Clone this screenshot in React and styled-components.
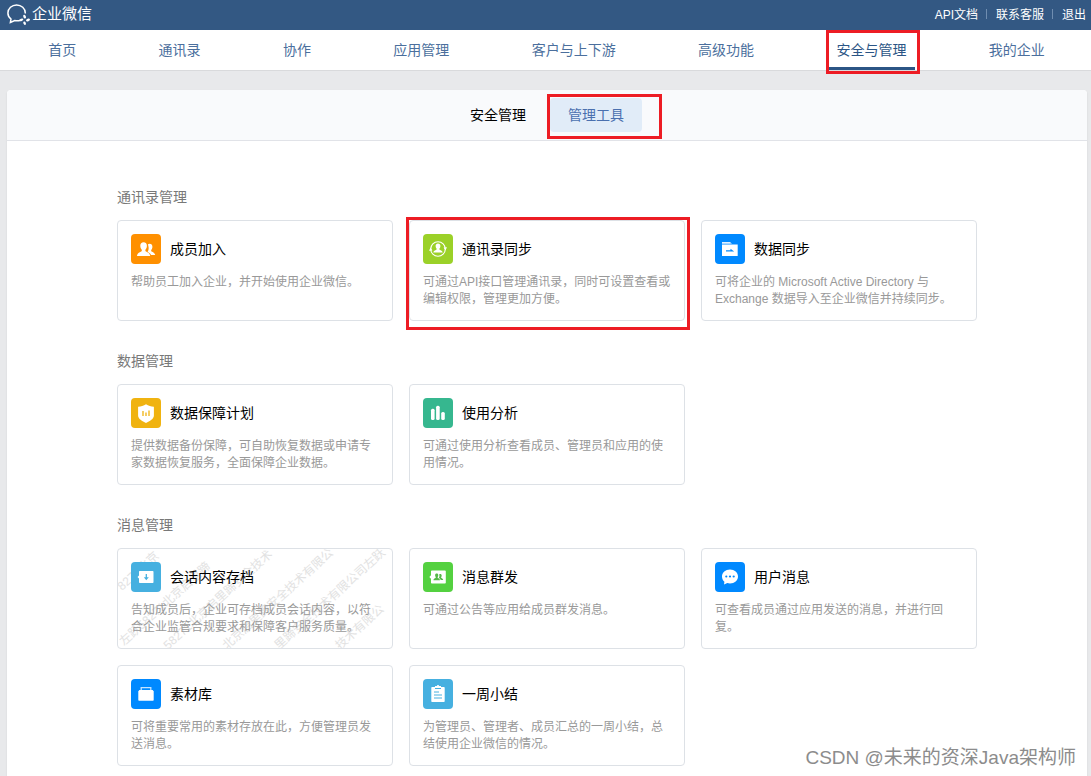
import React from 'react'
import styled, { createGlobalStyle, css } from 'styled-components'

const GlobalStyle = createGlobalStyle`
  * {
    box-sizing: border-box;
  }
  body {
    margin: 0;
    background-color: #e8e9eb;
    font-family: 'Liberation Sans', 'Noto Sans CJK SC', sans-serif;
    font-size: 14px;
    color: #000;
  }
  a {
    color: inherit;
    text-decoration: none;
  }
`

const mark = css`
  content: '';
  position: absolute;
  border: 3px solid #ed1c24;
  pointer-events: none;
  z-index: 1;
`
const Page = styled.div`
  position: relative;
  display: flex;
  flex-direction: column;
  min-height: 100vh;
`
const TopBar = styled.header`
  display: flex;
  align-items: flex-start;
  justify-content: space-between;
  height: 30px;
  padding: 0 5px 0 6px;
  background-color: #335883;
  color: #fff;
`
const Brand = styled.a`
  display: flex;
  align-items: center;
  gap: 2px;
  height: 27px;
  font-size: 15px;
  line-height: 20px;
`
const TopLinks = styled.div`
  display: flex;
  align-items: center;
  height: 27px;
  font-size: 12px;
`
const TopLink = styled.a`
  & + &::before {
    content: '';
    display: inline-block;
    width: 1px;
    height: 10px;
    margin: 0 9px 0 8px;
    background-color: #6f8db0;
  }
`
const Nav = styled.nav`
  display: flex;
  justify-content: space-around;
  height: 41px;
  padding: 0 5px 0 7px;
  background-color: #fff;
  border-bottom: 1px solid #d9dadc;
`
const NavLink = styled.a`
  position: relative;
  line-height: 40px;
  color: #4b6f9d;
  ${(props) =>
    props.$active &&
    css`
      color: #2b5585;
      &::before {
        content: '';
        position: absolute;
        left: -7px;
        right: -9px;
        bottom: 0;
        height: 3px;
        background-color: #2b5585;
      }
      &::after {
        ${mark}
        top: 0;
        bottom: -4px;
        left: -10px;
        right: -14px;
      }
    `}
`
const Panel = styled.main`
  flex: 1;
  margin: 19px 4px 0 7px;
  background-color: #fff;
  border-radius: 4px 4px 0 0;
  box-shadow: 0 1px 2px rgba(0, 0, 0, 0.1);
`
const Tabs = styled.div`
  display: flex;
  align-items: center;
  justify-content: center;
  gap: 6px;
  height: 51px;
  background-color: #f9fafc;
  border-bottom: 1px solid #e1e3e8;
  border-radius: 4px 4px 0 0;
`
const Tab = styled.a`
  position: relative;
  padding: 0 18px;
  line-height: 34px;
  border-radius: 4px;
  ${(props) =>
    props.$active &&
    css`
      background-color: #e1ecf8;
      color: #4a70af;
      &::after {
        ${mark}
        top: -4px;
        bottom: -7px;
        left: -3px;
        right: -20px;
      }
    `}
`
const Content = styled.div`
  display: flex;
  flex-direction: column;
  gap: 30px;
  padding: 46px 110px 10px;
`
const SectionTitle = styled.h2`
  margin: 0 0 13px;
  font-size: 14px;
  font-weight: 400;
  line-height: 20px;
  color: #787878;
`
const Cards = styled.div`
  display: grid;
  grid-template-columns: repeat(3, 1fr);
  gap: 16px;
`
const CardLink = styled.a`
  position: relative;
  padding: 13px 13px 12px;
  border: 1px solid #dde1e6;
  border-radius: 4px;
  background-color: #fff;
  ${(props) =>
    props.$marked &&
    css`
      &::after {
        ${mark}
        top: -4px;
        bottom: -10px;
        left: -4px;
        right: -6px;
      }
    `}
`
const CardHead = styled.div`
  position: relative;
  display: flex;
  align-items: center;
  gap: 9px;
`
const CardTitle = styled.h3`
  margin: 0;
  font-size: 14px;
  font-weight: 400;
  line-height: 20px;
`
const CardDesc = styled.p`
  position: relative;
  margin: 10px 0 0;
  font-size: 12px;
  line-height: 17px;
  color: #999;
`
const IconBox = styled.svg`
  flex: none;
  width: 30px;
  height: 30px;
  border-radius: 4px;
  background-color: ${(props) => props.$bg};
`
const Stamp = styled.svg`
  position: absolute;
  top: 0;
  left: 0;
  width: 100%;
  height: 100%;
  font-size: 12px;
  fill: #e2e2e2;
`
const Credit = styled.div`
  position: absolute;
  right: 15px;
  bottom: 5px;
  font-size: 19px;
  line-height: 26px;
  color: #8c8c8c;
  text-shadow: 0 0 1px #fff;
`

const icons = {
  members: {
    bg: '#ff9000',
    art: (
      <>
        <path
          fill="#fff"
          d="M18.6 9.8c1.8 0 2.8 1.3 2.8 3 0 1.400-.5 2.300-1.100 3.100-.3.500-.2 1.300.3 1.600 1.500.8 3.200 1.300 3.600 3.500H20c-.4-1.600-1.900-2.300-3.400-3 .9-1.400 1.300-3.200.9-5.200-.2-1.200-.4-1.700-.6-2.200.4-.5 1-.8 1.700-.8z"
        />
        <path
          fill="#fff"
          d="M12.600 8.200c2.100 0 3.300 1.500 3.300 3.500 0 1.700-.6 2.900-1.300 3.800-.4.600-.3 1.600.3 1.900 1.900 1 4 1.400 4.300 4.600H6c.3-3.200 2.400-3.600 4.300-4.600.6-.3.7-1.300.3-1.900-.7-.9-1.300-2.100-1.300-3.800 0-2 1.200-3.500 3.300-3.500z"
        />
      </>
    ),
  },
  sync: {
    bg: '#9bd128',
    art: (
      <>
        <circle cx="15" cy="15" r="7.300" fill="none" stroke="#fff" strokeWidth="1.100" />
        <path fill="#fff" d="M6 16.800l1.600-3.200 1.800 3zM24 13.200l-1.600 3.200-1.800-3z" />
        <path
          fill="#fff"
          d="M15 9.600c1.500 0 2.400 1 2.400 2.500 0 1.100-.4 1.900-.9 2.500-.3.400-.2 1 .2 1.200 1.200.6 2.800.9 3 2.800h-9.400c.2-1.900 1.800-2.200 3-2.800.4-.2.500-.8.200-1.200-.5-.6-.9-1.400-.9-2.500 0-1.500.9-2.500 2.400-2.500z"
        />
      </>
    ),
  },
  folder: {
    bg: '#0089ff',
    art: (
      <>
        <path fill="#b8deff" d="M7 8.300h8.500l1.500 1.500H7z" />
        <path fill="#fff" d="M7 8.300h8.200v1H7zM7 10.500h15.700v11.400H7z" />
        <path fill="#0089ff" d="M11 16.200h4.500v-1.500l3.700 2.700H11z" />
      </>
    ),
  },
  shield: {
    bg: '#f0b310',
    art: (
      <>
        <path fill="#fff" d="M15 6.200c2.400 1.400 5 2.300 7.900 2.600v8.700c0 3.400-4.100 5.700-7.900 7.600-3.800-1.900-7.900-4.200-7.900-7.600V8.800c2.900-.3 5.500-1.200 7.900-2.600z" />
        <path fill="none" stroke="#f0b310" strokeWidth="1.300" d="M12 13v5M15 14.500V18M18 12.500V18" />
      </>
    ),
  },
  chart: {
    bg: '#36b78f',
    art: (
      <>
        <rect x="8" y="10.700" width="3.600" height="11.300" rx="1.500" fill="#fff" />
        <rect x="13.100" y="7.800" width="3.600" height="14.200" rx="1.500" fill="#fff" />
        <rect x="18.200" y="14" width="3.600" height="8" rx="1.500" fill="#fff" />
      </>
    ),
  },
  archive: {
    bg: '#46b0e0',
    art: (
      <>
        <path fill="#fff" d="M8.500 9h13.200c.5 0 .8.300.8.800v10.400c0 .5-.3.800-.8.800H8.800c-.5 0-.8-.3-.8-.8v-3.700L6.500 15 8 13.500V9.500z" />
        <path fill="none" stroke="#46b0e0" strokeWidth="1.300" d="M15.300 12v5" />
        <path fill="#46b0e0" d="M12.800 15.200h5l-2.500 3.100z" />
      </>
    ),
  },
  broadcast: {
    bg: '#54d140',
    art: (
      <>
        <path fill="#fff" d="M8.800 8.500H22c.5 0 .8.300.8.800v11.400c0 .5-.3.800-.8.800H8.800c-.5 0-.8-.3-.8-.8v-4L6.300 15 8 13.300v-4c0-.5.300-.8.800-.8z" />
        <path
          fill="#54b847"
          d="M13.700 11.500c1 0 1.600.7 1.600 1.700 0 .9-.3 1.400-.6 1.900-.2.300-.1.800.2.900.9.500 1.900.7 2.100 2.300h-6.600c.2-1.600 1.200-1.800 2.100-2.300.3-.1.400-.6.200-.9-.3-.5-.6-1-.6-1.900 0-1 .6-1.700 1.600-1.700z"
        />
        <path fill="#54b847" d="M17.300 12c.9 0 1.400.7 1.400 1.500s-.3 1.300-.5 1.700c-.2.300-.1.700.2.800.8.400 1.600.8 1.800 1.900h-2.500c-.3-1.200-1-1.500-1.900-2 .7-1 .8-2.200.4-3.500.2-.2.700-.4 1.100-.4z" />
      </>
    ),
  },
  message: {
    bg: '#0089ff',
    art: (
      <>
        <path fill="#fff" d="M15 7.500c4.500 0 8 3 8 7s-3.500 7-8 7c-1 0-1.900-.1-2.700-.4L9 22.500l.4-2.800C7.900 18.400 7 16.600 7 14.500c0-4 3.500-7 8-7z" />
        <circle cx="11.300" cy="14.500" r="1.100" fill="#0089ff" />
        <circle cx="15" cy="14.500" r="1.100" fill="#0089ff" />
        <circle cx="18.700" cy="14.500" r="1.100" fill="#0089ff" />
      </>
    ),
  },
  material: {
    bg: '#0089ff',
    art: (
      <>
        <path fill="none" stroke="#c4e3ff" strokeWidth="1.300" d="M10.200 12V8.700h9.600V12" />
        <path fill="#fff" d="M8.300 11h13.400l1 1.500v8.600c0 .4-.3.700-.7.700H8c-.4 0-.7-.3-.7-.7v-8.600z" />
      </>
    ),
  },
  report: {
    bg: '#46b0e0',
    art: (
      <>
        <path fill="#fff" d="M9 8h3V7h2c0-1.300 2-1.300 2 0h2v1h3c.4 0 .7.300.7.700v13.600c0 .4-.3.700-.7.700H9c-.4 0-.7-.3-.7-.7V8.700c0-.4.300-.7.700-.7z" />
        <path fill="none" stroke="#46b0e0" strokeWidth="1" d="M12 9.500h6M11 13h5M11 16h8M11 19h8" />
      </>
    ),
  },
}

const navItems = ['首页', '通讯录', '协作', '应用管理', '客户与上下游', '高级功能', '安全与管理', '我的企业']

const sections = [
  {
    title: '通讯录管理',
    items: [
      { icon: 'members', title: '成员加入', desc: '帮助员工加入企业，并开始使用企业微信。' },
      {
        icon: 'sync',
        title: '通讯录同步',
        desc: '可通过API接口管理通讯录，同时可设置查看或编辑权限，管理更加方便。',
        marked: true,
      },
      {
        icon: 'folder',
        title: '数据同步',
        desc: '可将企业的 Microsoft Active Directory 与 Exchange 数据导入至企业微信并持续同步。',
      },
    ],
  },
  {
    title: '数据管理',
    items: [
      {
        icon: 'shield',
        title: '数据保障计划',
        desc: '提供数据备份保障，可自助恢复数据或申请专家数据恢复服务，全面保障企业数据。',
      },
      { icon: 'chart', title: '使用分析', desc: '可通过使用分析查看成员、管理员和应用的使用情况。' },
    ],
  },
  {
    title: '消息管理',
    items: [
      {
        icon: 'archive',
        title: '会话内容存档',
        desc: '告知成员后，企业可存档成员会话内容，以符合企业监管合规要求和保障客户服务质量。',
        stamped: true,
      },
      { icon: 'broadcast', title: '消息群发', desc: '可通过公告等应用给成员群发消息。' },
      { icon: 'message', title: '用户消息', desc: '可查看成员通过应用发送的消息，并进行回复。' },
      { icon: 'material', title: '素材库', desc: '可将重要常用的素材存放在此，方便管理员发送消息。' },
      {
        icon: 'report',
        title: '一周小结',
        desc: '为管理员、管理者、成员汇总的一周小结，总结使用企业微信的情况。',
      },
    ],
  },
]

const stampLines = [
  { x: 4, y: 42, text: '8271北京' },
  { x: 6, y: 97, text: '左跃58271北京启里蹄' },
  { x: 50, y: 101, text: '58271北京启里蹄安全技术' },
  { x: 109, y: 101, text: '北京启里蹄安全技术有限公' },
  { x: 161, y: 101, text: '里蹄安全技术有限公司左跃' },
  { x: 222, y: 101, text: '技术有限公' },
]

const Logo = () => (
  <svg width="24" height="22" viewBox="0 0 24 22" fill="none" stroke="#fff" strokeWidth="1.500" aria-hidden="true">
    <path d="M14.500 17.200c-1.600.6-3.600.8-5.800.3L4.400 19.400l.6-3.400C3 14.500 1.900 12.400 1.900 10 1.900 5.400 5.800 1.900 10.600 1.900s8.700 3.500 8.700 8.100v.5" />
    <g fill="#fff" stroke="none">
      <ellipse cx="18.600" cy="13.600" rx="1.300" ry="2" transform="rotate(-20 18.600 13.600)" />
      <ellipse cx="22" cy="17" rx="2" ry="1.200" transform="rotate(-20 22 17)" />
      <ellipse cx="18.600" cy="20.200" rx="1.200" ry="1.800" transform="rotate(-20 18.600 20.200)" />
      <ellipse cx="15.400" cy="16.800" rx="2" ry="1.200" transform="rotate(-20 15.400 16.800)" />
    </g>
  </svg>
)

const Card = ({ item }) => (
  <CardLink href="#" $marked={item.marked}>
    {item.stamped && (
      <Stamp aria-hidden="true">
        {stampLines.map((line) => (
          <text key={line.x} transform={`translate(${line.x} ${line.y}) rotate(-42)`}>
            {line.text}
          </text>
        ))}
      </Stamp>
    )}
    <CardHead>
      <IconBox viewBox="0 0 30 30" $bg={icons[item.icon].bg} aria-hidden="true">
        {icons[item.icon].art}
      </IconBox>
      <CardTitle>{item.title}</CardTitle>
    </CardHead>
    <CardDesc>{item.desc}</CardDesc>
  </CardLink>
)

const App = () => {
  return (
    <Page>
      <GlobalStyle />
      <TopBar>
        <Brand href="#">
          <Logo />
          企业微信
        </Brand>
        <TopLinks>
          <TopLink href="#">API文档</TopLink>
          <TopLink href="#">联系客服</TopLink>
          <TopLink href="#">退出</TopLink>
        </TopLinks>
      </TopBar>
      <Nav>
        {navItems.map((name) => (
          <NavLink key={name} href="#" $active={name === '安全与管理'}>
            {name}
          </NavLink>
        ))}
      </Nav>
      <Panel>
        <Tabs>
          <Tab href="#">安全管理</Tab>
          <Tab href="#" $active>
            管理工具
          </Tab>
        </Tabs>
        <Content>
          {sections.map((section) => (
            <section key={section.title}>
              <SectionTitle>{section.title}</SectionTitle>
              <Cards>
                {section.items.map((item) => (
                  <Card key={item.title} item={item} />
                ))}
              </Cards>
            </section>
          ))}
        </Content>
      </Panel>
      <Credit>CSDN @未来的资深Java架构师</Credit>
    </Page>
  )
}

export default App
